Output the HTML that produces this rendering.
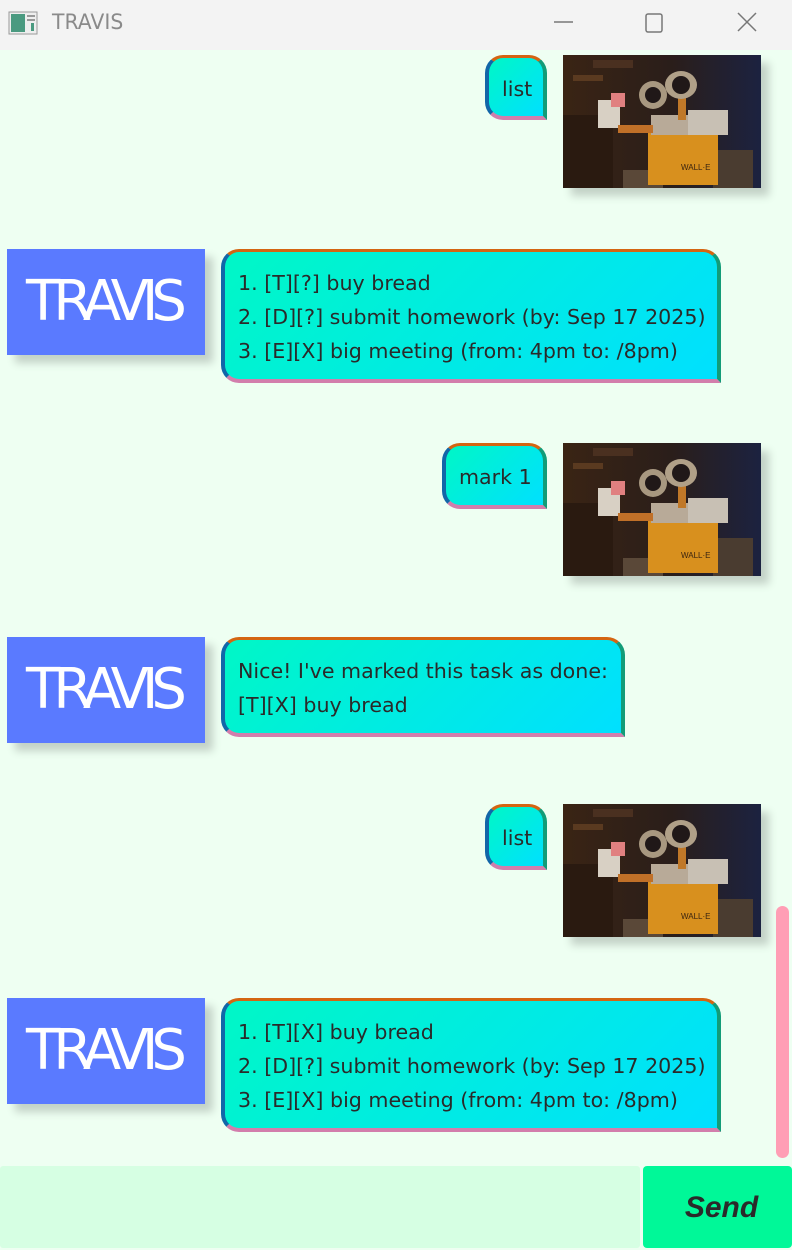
<!DOCTYPE html>
<html><head><meta charset="utf-8"><style>
*{margin:0;padding:0;box-sizing:border-box}
body{width:792px;height:1248px;background:#eefff2;position:relative;overflow:hidden;font-family:"Liberation Sans",sans-serif}
.tb{position:absolute;left:0;top:0;width:792px;height:50px;background:#f3f3f3}
.tb .t{position:absolute;left:52px;top:10px;font-size:21px;color:#8a8a8a;font-family:"DejaVu Sans","Liberation Sans",sans-serif;transform:scaleX(.97);transform-origin:left}
.b{position:absolute;background:linear-gradient(135deg,#00f7c6,#00e0ff);border-style:solid;border-width:3px 4px 4px 4px;border-color:#d46512 #129c78 #d27eac #1266a8;border-radius:18px 18px 0 18px;color:#2a2a2a;font-family:"DejaVu Sans","Liberation Sans",sans-serif;font-size:20.6px;line-height:34px;padding:14px 0 0 13px;white-space:nowrap}
.av{position:absolute;left:7px;width:198px;height:106px;background:#5a7aff;box-shadow:8px 8px 8px #c3d2c7;color:#fff;font-family:"DejaVu Sans","Liberation Sans",sans-serif;font-size:56px;letter-spacing:-7px;text-align:center;line-height:106px;text-indent:-6px}
.im{position:absolute;left:563px;width:198px;height:133px;box-shadow:8px 8px 8px #c3d2c7}
.sb{position:absolute;left:776px;top:906px;width:13px;height:252px;border-radius:7px;background:#ff9eb5}
.in{position:absolute;left:0;top:1166px;width:640px;height:82px;background:#d6ffe3;border-radius:3px}
.send{position:absolute;left:643px;top:1166px;width:149px;height:82px;background:#00f898;border-radius:4px;font-weight:bold;font-style:italic;font-size:30px;color:#2a2a2a;text-align:center;line-height:84px;padding-left:8px}
</style></head><body>
<svg width="0" height="0" style="position:absolute"><defs>
<symbol id="w" viewBox="0 0 198 133">
<defs><linearGradient id="bg" x1="0" y1="0" x2="1" y2="0"><stop offset="0" stop-color="#3a2414"/><stop offset=".55" stop-color="#2a1e1a"/><stop offset="1" stop-color="#1c2240"/></linearGradient></defs>
<rect width="198" height="133" fill="url(#bg)"/>
<rect x="0" y="60" width="50" height="73" fill="#2a1a10"/>
<rect x="10" y="20" width="30" height="6" fill="#5a3a20"/>
<rect x="30" y="5" width="40" height="8" fill="#4a3020"/>
<rect x="60" y="115" width="40" height="18" fill="#5a4838"/>
<rect x="150" y="95" width="40" height="38" fill="#4a3c30"/>
<rect x="85" y="70" width="70" height="60" fill="#d8901e"/>
<rect x="88" y="60" width="45" height="20" fill="#b8aa98"/>
<rect x="125" y="55" width="40" height="25" fill="#c8c0b4"/>
<rect x="115" y="40" width="8" height="25" fill="#c07828"/>
<ellipse cx="90" cy="40" rx="14" ry="14" fill="#a89880"/><circle cx="90" cy="40" r="8" fill="#201818"/>
<ellipse cx="118" cy="30" rx="16" ry="14" fill="#b0a088"/><circle cx="118" cy="30" r="9" fill="#201818"/>
<rect x="35" y="45" width="22" height="28" fill="#d8d0c4"/>
<rect x="48" y="38" width="14" height="14" fill="#e08080"/>
<rect x="55" y="70" width="35" height="8" fill="#c07028"/>
<text x="118" y="115" font-size="8" fill="#3a2410" font-family="Liberation Sans">WALL·E</text>
</symbol></defs></svg>
<div class="tb">
<svg style="position:absolute;left:8px;top:11px" width="30" height="24"><rect x="1" y="1" width="28" height="22" fill="#eee" stroke="#999"/><rect x="3" y="3" width="14" height="18" fill="#4a9a80"/><rect x="19" y="4" width="8" height="2" fill="#999"/><rect x="19" y="8" width="8" height="2" fill="#999"/><rect x="23" y="12" width="3" height="8" fill="#4a9a80"/></svg>
<div class="t">TRAVIS</div>
<svg style="position:absolute;left:552px;top:12px" width="210" height="24"><line x1="2" y1="10" x2="21" y2="10" stroke="#777" stroke-width="1.5"/><rect x="94" y="2" width="16" height="18" rx="2" fill="none" stroke="#777" stroke-width="1.5"/><path d="M186 1 L204 19 M204 1 L186 19" stroke="#777" stroke-width="1.5"/></svg>
</div>

<div class="b" style="left:485px;top:55px;width:62px;height:65px">list</div>
<svg class="im" style="top:55px"><use href="#w"/></svg>
<div class="av" style="top:249px">TRAVIS</div>
<div class="b" style="left:221px;top:249px;width:500px;height:134px">1. [T][?] buy bread<br>2. [D][?] submit homework (by: Sep 17 2025)<br>3. [E][X] big meeting (from: 4pm to: /8pm)</div>

<div class="b" style="left:442px;top:443px;width:105px;height:66px">mark 1</div>
<svg class="im" style="top:443px"><use href="#w"/></svg>
<div class="av" style="top:637px">TRAVIS</div>
<div class="b" style="left:221px;top:637px;width:404px;height:100px">Nice! I've marked this task as done:<br>[T][X] buy bread</div>

<div class="b" style="left:485px;top:804px;width:62px;height:66px">list</div>
<svg class="im" style="top:804px"><use href="#w"/></svg>
<div class="av" style="top:998px">TRAVIS</div>
<div class="b" style="left:221px;top:998px;width:500px;height:134px">1. [T][X] buy bread<br>2. [D][?] submit homework (by: Sep 17 2025)<br>3. [E][X] big meeting (from: 4pm to: /8pm)</div>

<div class="sb"></div>
<div class="in"></div>
<div class="send">Send</div>
</body></html>
